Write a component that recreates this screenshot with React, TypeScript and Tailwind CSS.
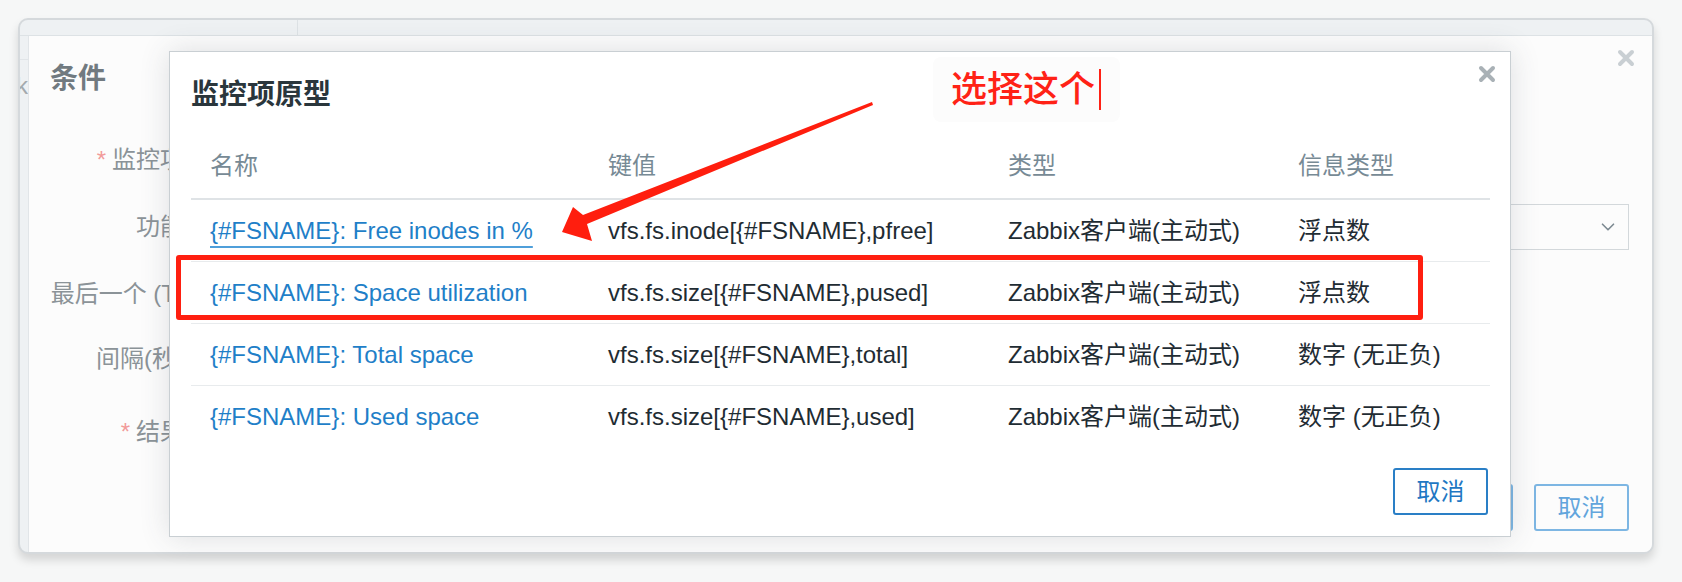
import { ChevronDown } from "lucide-react";

const rows = [
  { name: "{#FSNAME}: Free inodes in %", key: "vfs.fs.inode[{#FSNAME},pfree]", type: "Zabbix客户端(主动式)", info: "浮点数", hover: true },
  { name: "{#FSNAME}: Space utilization", key: "vfs.fs.size[{#FSNAME},pused]", type: "Zabbix客户端(主动式)", info: "浮点数" },
  { name: "{#FSNAME}: Total space", key: "vfs.fs.size[{#FSNAME},total]", type: "Zabbix客户端(主动式)", info: "数字 (无正负)" },
  { name: "{#FSNAME}: Used space", key: "vfs.fs.size[{#FSNAME},used]", type: "Zabbix客户端(主动式)", info: "数字 (无正负)", last: true },
];

function CloseX({ className }: { className: string }) {
  return (
    <svg width="18" height="18" viewBox="0 0 18 18" className={className}>
      <path d="M3 3 L15 15 M15 3 L3 15" stroke="currentColor" strokeWidth="4" strokeLinecap="round" />
    </svg>
  );
}

function BackDialog() {
  return (
    <div className="relative flex-1 flex flex-col bg-[#fcfcfc] pl-[21px] pr-[23px] pb-[21px]">
      {/* close */}
      <CloseX className="absolute right-[17px] top-[13px] text-[#c9cfd3]" />

      {/* title */}
      <div className="pt-[25px] text-[28px] leading-[36px] font-bold text-[#717a80]">条件</div>

      {/* form */}
      <div className="mt-[40px] flex flex-col gap-[21px] -ml-[21px]">
        <div className="flex items-center h-[46px]">
          <div className="w-[155px] text-right text-[24px] text-[#8b9398]">
            <span className="text-[#f29a9a] mr-[6px]">*</span>监控项
          </div>
        </div>
        <div className="flex items-center h-[46px]">
          <div className="w-[155px] text-right text-[24px] text-[#8b9398]">功能</div>
          <div className="ml-[16px] flex-1 h-[46px] border border-[#d3d8db] flex items-center justify-end pr-[9px]">
            <ChevronDown size={22} strokeWidth={1.8} className="text-[#7d8a92]" />
          </div>
        </div>
        <div className="flex items-center h-[46px]">
          <div className="w-[155px] text-right text-[24px] text-[#8b9398] whitespace-nowrap">最后一个 (T)</div>
        </div>
        <div className="flex items-center h-[42px]">
          <div className="w-[155px] text-right text-[24px] text-[#8b9398]">间隔(秒)</div>
        </div>
        <div className="flex items-center h-[46px] mt-[8px]">
          <div className="w-[155px] text-right text-[24px] text-[#8b9398]">
            <span className="text-[#f29a9a] mr-[6px]">*</span>结果
          </div>
        </div>
      </div>

      {/* buttons */}
      <div className="mt-auto flex justify-end gap-[21px]">
        <div className="w-[95px] h-[47px] rounded-[3px] border-2 border-[#7db6e3]" />
        <div className="w-[95px] h-[47px] rounded-[3px] border-2 border-[#7db6e3] flex items-center justify-center text-[24px] text-[#62a5dc]">
          取消
        </div>
      </div>
    </div>
  );
}

function FrontDialog() {
  return (
    <div className="absolute left-[169px] top-[51px] w-[1342px] h-[486px] bg-white border border-[#c9cfd3] shadow-[0_0_28px_rgba(60,70,80,0.16)] flex flex-col px-[21px]">
      <CloseX className="absolute right-[14px] top-[13px] text-[#a9b1b6]" />

      <div className="pt-[25px] text-[28px] leading-[36px] font-bold text-[#2a363c]">监控项原型</div>

      <div className="mt-[21px] w-[1299px]">
        <div className="grid grid-cols-[398px_400px_290px_211px] h-[66px] items-center border-b-2 border-[#dfe3e6] text-[24px] text-[#778a95]">
          <div className="pl-[19px]">名称</div>
          <div className="pl-[19px]">键值</div>
          <div className="pl-[19px]">类型</div>
          <div className="pl-[19px]">信息类型</div>
        </div>
        {rows.map((r) => (
          <div
            key={r.key}
            className={`grid grid-cols-[398px_400px_290px_211px] h-[62px] items-center text-[24px] text-[#1f2c33] whitespace-nowrap ${r.last ? "" : "border-b border-[#e8ebed]"}`}
          >
            <div className="pl-[19px]">
              <span className={r.hover ? "text-[#1f7fc8] underline decoration-2 decoration-[#4f9fda] underline-offset-[7px]" : "text-[#1f7fc8]"}>
                {r.name}
              </span>
            </div>
            <div className="pl-[19px]">{r.key}</div>
            <div className="pl-[19px]">{r.type}</div>
            <div className="pl-[19px]">{r.info}</div>
          </div>
        ))}
      </div>

      <div className="mt-[20px] flex justify-end pr-px">
        <div className="w-[95px] h-[47px] rounded-[3px] border-2 border-[#2a7fc6] flex items-center justify-center text-[24px] text-[#1f78c3]">
          取消
        </div>
      </div>
    </div>
  );
}

export default function App() {
  return (
    <div className="relative w-[1682px] h-[582px] overflow-hidden bg-[#f6f7f7] font-['Liberation_Sans','Noto_Sans_CJK_SC',sans-serif]">
      {/* window frame */}
      <div className="absolute left-[18px] top-[18px] w-[1636px] h-[536px] rounded-[10px] border-2 border-[#d5d9dc] bg-[#eef1f3] shadow-[0_6px_10px_rgba(0,0,0,0.14)] overflow-hidden flex flex-col">
        <div className="h-[16px] flex border-b border-[#dde2e5]">
          <div className="w-[278px] border-r border-[#dde2e5]" />
        </div>
        <div className="flex flex-1">
          <div className="w-[9px] flex flex-col border-r border-[#e1e5e8] overflow-hidden">
            <div className="h-[24px] border-b border-[#e1e5e8]" />
            <div className="mt-[14px] text-[24px] leading-none text-[#a3aaae] -ml-[4px]">k</div>
          </div>
          <BackDialog />
        </div>
      </div>

      <FrontDialog />

      {/* annotation: highlight box */}
      <div className="absolute left-[176px] top-[255px] w-[1247px] h-[65px] border-[5px] border-[#ff1f10] rounded-[3px]" />

      {/* annotation: text */}
      <div className="absolute left-[933px] top-[57px] w-[187px] h-[65px] rounded-[8px] bg-[#fcfcfc] flex items-center pl-[18px]">
        <span className="text-[36px] leading-none font-medium text-[#ff2216]">选择这个</span>
        <span className="ml-[4px] w-[2px] h-[41px] bg-[#ff2216]" />
      </div>

      {/* annotation: arrow */}
      <svg className="absolute left-0 top-0 pointer-events-none" width="1682" height="582" viewBox="0 0 1682 582">
        <polygon
          points="562,232 573,207 583,215 872,102 873,105 587,224 592,241"
          fill="#ff1e0e"
        />
      </svg>
    </div>
  );
}
